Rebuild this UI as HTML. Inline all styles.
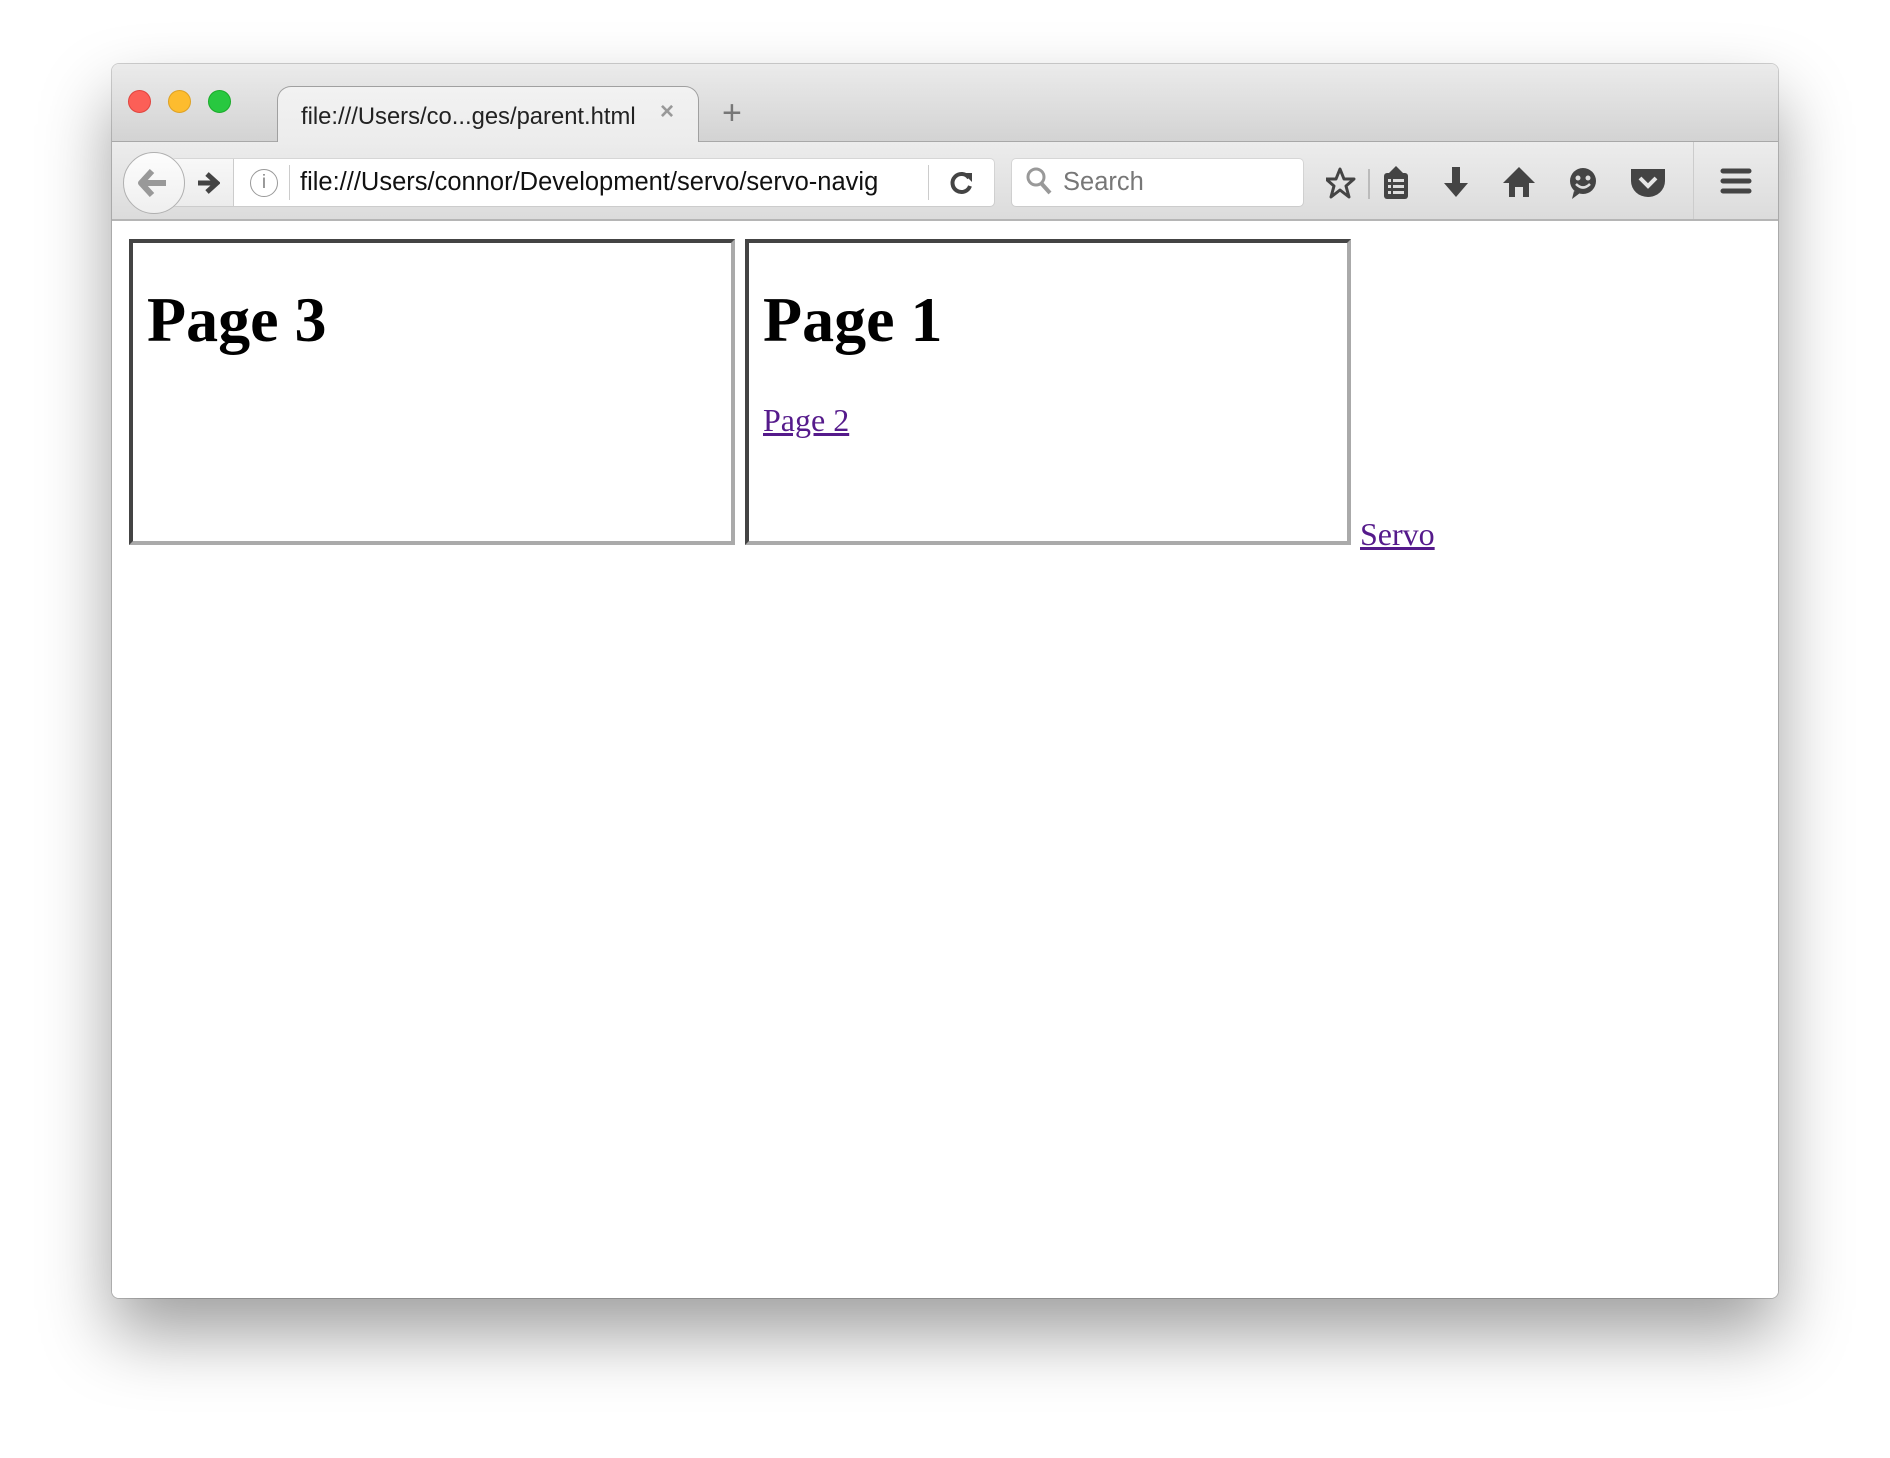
<!DOCTYPE html>
<html><head><meta charset="utf-8"><style>
*{margin:0;padding:0;box-sizing:border-box}
body{width:1890px;height:1458px;background:#fff;position:relative;overflow:hidden;font-family:"Liberation Sans",sans-serif}
#win{position:absolute;left:112px;top:64px;width:1666px;height:1234px;border-radius:7px;background:#fff;box-shadow:0 36px 70px rgba(0,0,0,.38),0 0 0 1px rgba(0,0,0,.18);overflow:hidden}
#tabs{position:absolute;left:0;top:0;width:100%;height:78px;background:linear-gradient(#ebebeb,#d3d3d3);border-bottom:1px solid #a8a8a8}
.tl{position:absolute;top:26px;width:23px;height:23px;border-radius:50%}
#tab{position:absolute;left:165px;top:22px;width:422px;height:57px;background:linear-gradient(#f2f2f2,#ececec);border:1.5px solid #a0a0a0;border-bottom:none;border-radius:14px 14px 0 0}
#tabtxt{position:absolute;left:189px;top:39px;font-size:23.8px;color:#222}
#toolbar{position:absolute;left:0;top:78px;width:100%;height:79px;background:linear-gradient(#ececec,#dcdcdc);border-bottom:2px solid #b5b5b5}
#tb{position:absolute;left:0;top:3px;width:100%;height:76px}
.box{position:absolute;background:#fff;border-radius:4px;box-shadow:0 0 0 1px rgba(0,0,0,.08)}
#content{position:absolute;left:0;top:157px;width:100%;bottom:0;background:#fff}
.fr{position:absolute;top:18px;width:606px;height:306px;border:4px solid;border-color:#444 #aaa #aaa #444;font-family:"Liberation Serif",serif}
.fr h1{position:absolute;left:14px;top:40px;font-size:64px;font-weight:bold;color:#000}
a{color:#551a8b;text-decoration:underline;font-family:"Liberation Serif",serif;font-size:32px;position:absolute}
</style></head><body>
<div id="win">
 <div id="tabs">
  <div class="tl" style="left:16px;background:#fc5f57;border:1px solid #e0443e"></div>
  <div class="tl" style="left:56px;background:#fdbc2e;border:1px solid #dea123"></div>
  <div class="tl" style="left:96px;background:#28c840;border:1px solid #1aab29"></div>
  <div id="tab"></div>
  <div id="tabtxt">file:///Users/co...ges/parent.html</div>
  <div style="position:absolute;left:548px;top:34px;font-size:24px;color:#999;font-weight:bold">×</div>
  <div style="position:absolute;left:610px;top:30px;font-size:34px;color:#777">+</div>
 </div>
 <div id="toolbar"><div id="tb">
  <div class="box" style="left:60px;top:14px;width:822px;height:47px"></div>
  <div style="position:absolute;left:60px;top:14px;width:62px;height:47px;border-right:1px solid #ccc;background:linear-gradient(#f8f8f8,#ececec)"></div>
  <div style="position:absolute;left:11px;top:7px;width:62px;height:62px;border-radius:50%;background:linear-gradient(#fdfdfd,#efefef);border:1.5px solid #b0b0b0"></div>
  <svg style="position:absolute;left:26px;top:24px" width="30" height="28" viewBox="0 0 30 28"><path d="M14 2 L3 14 L14 26 M3 14 H28" stroke="#999" stroke-width="6" fill="none" stroke-linejoin="round"/></svg>
  <svg style="position:absolute;left:84px;top:27px" width="24" height="22" viewBox="0 0 24 22"><path d="M11 2 L21 11 L11 20 M21 11 H2" stroke="#444" stroke-width="5" fill="none"/></svg>
  <div style="position:absolute;left:138px;top:24px;width:28px;height:28px;border-radius:50%;border:1.5px solid #999;color:#888;font-size:19px;text-align:center;line-height:25px;font-family:'Liberation Sans',sans-serif">i</div>
  <div style="position:absolute;left:177px;top:20px;width:1px;height:35px;background:#ccc"></div>
  <div style="position:absolute;left:188px;top:23px;font-size:25.5px;color:#111;width:578px;overflow:hidden;white-space:nowrap">file:///Users/connor/Development/servo/servo-navigation</div>
  <div style="position:absolute;left:816px;top:20px;width:1px;height:35px;background:#ccc"></div>
  <svg style="position:absolute;left:837px;top:25px" width="26" height="26" viewBox="0 0 26 26"><path d="M20 8 A9 9 0 1 0 21 16" stroke="#444" stroke-width="4" fill="none"/><path d="M14 3 L23 3 L23 12 Z" fill="#444"/></svg>
  <div class="box" style="left:900px;top:14px;width:291px;height:47px"></div>
  <svg style="position:absolute;left:913px;top:21px" width="28" height="30" viewBox="0 0 28 30"><circle cx="11" cy="11" r="8" stroke="#999" stroke-width="3" fill="none"/><path d="M16 17 L25 27" stroke="#999" stroke-width="4"/></svg>
  <div style="position:absolute;left:951px;top:23px;font-size:25.5px;color:#777">Search</div>
  <svg style="position:absolute;left:1214px;top:18px" width="460" height="40" viewBox="0 0 460 40">
   <path d="M14 4 L18 14 L28 14 L20 21 L23 32 L14 25 L5 32 L8 21 L0 14 L10 14 Z" transform="translate(0,2)" stroke="#444" stroke-width="3" fill="none" stroke-linejoin="round"/>
   <rect x="42" y="6" width="2" height="30" fill="#bbb"/>
   <g transform="translate(5,0)"><rect x="53" y="10" width="24" height="26" rx="3" fill="#444"/><path d="M58 10 L65 3 L72 10Z" fill="#444"/>
   <g fill="#ddd"><rect x="57" y="16" width="3" height="3"/><rect x="62" y="16" width="11" height="3"/><rect x="57" y="22" width="3" height="3"/><rect x="62" y="22" width="11" height="3"/><rect x="57" y="28" width="3" height="3"/><rect x="62" y="28" width="11" height="3"/></g></g>
   <path d="M126 4 H134 V20 H142 L130 34 L118 20 H126 Z" fill="#444"/>
   <path d="M193 4 L209 20 H203 V34 H197 V24 H189 V34 H183 V20 H177 Z" fill="#444"/>
   <g transform="translate(20,0)"><circle cx="237" cy="18" r="13" fill="#444"/><path d="M228 28 L226 36 L234 30Z" fill="#444"/><circle cx="232" cy="15" r="2.5" fill="#ddd"/><circle cx="242" cy="15" r="2.5" fill="#ddd"/><path d="M230 21 Q237 28 244 21" stroke="#ddd" stroke-width="2.5" fill="none"/></g>
   <g transform="translate(27,0)"><path d="M278 6 H312 V18 A17 16 0 0 1 278 18 Z" fill="#444"/><path d="M287 15 L295 23 L303 15" stroke="#e6e6e6" stroke-width="4" fill="none"/></g>
  </svg>
  <div style="position:absolute;left:1581px;top:-3px;width:1px;height:77px;background:#ccc"></div>
  <svg style="position:absolute;left:1608px;top:22px" width="32" height="28" viewBox="0 0 32 28"><g stroke="#444" stroke-width="5" stroke-linecap="round"><path d="M3 4H29M3 14H29M3 24H29"/></g></svg>
 </div></div>
 <div id="content">
  <div class="fr" style="left:17px"><h1>Page 3</h1></div>
  <div class="fr" style="left:633px"><h1>Page 1</h1><a style="left:14px;top:159px">Page 2</a></div>
  <a style="left:1248px;top:295px">Servo</a>
 </div>
</div>
</body></html>
